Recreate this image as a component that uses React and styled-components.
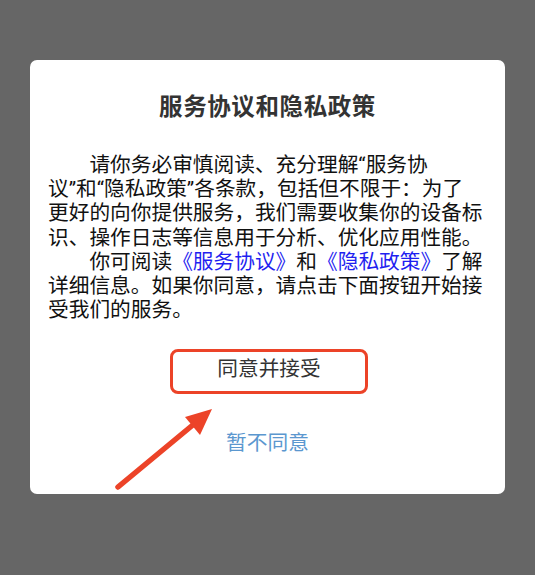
import React from "react";
import styled, { createGlobalStyle } from "styled-components";

const Global = createGlobalStyle`
  html, body { margin: 0; padding: 0; }
  body {
    background: #666666;
    font-family: "Roboto", "Noto Sans CJK SC", sans-serif;
  }
`;

const Screen = styled.div`
  width: 535px;
  height: 575px;
  background: #666666;
  padding-top: 60px;
  box-sizing: border-box;
  display: flex;
  justify-content: center;
`;

const Card = styled.div`
  position: relative;
  width: 475px;
  height: 434px;
  background: #ffffff;
  border-radius: 7px;
  box-sizing: border-box;
  padding: 32px 18px 0;
  display: flex;
  flex-direction: column;
  align-items: center;
`;

const Title = styled.h2`
  margin: 0;
  font-size: 23.5px;
  line-height: 30px;
  font-weight: 700;
  color: #333333;
  letter-spacing: 0.6px;
`;

const Body = styled.p`
  margin: 31px 0 0;
  align-self: stretch;
  font-size: 20.7px;
  line-height: 24.2px;
  color: #111111;
  white-space: nowrap;
`;

const Indent = styled.span`
  display: inline-block;
  width: 2em;
`;

const Link = styled.span`
  color: #1f1ff0;
`;

const AgreeButton = styled.button`
  margin-top: 27px;
  margin-left: 3px;
  width: 198px;
  height: 45px;
  box-sizing: border-box;
  border: 3.5px solid #ec4328;
  border-radius: 8px;
  background: #ffffff;
  font-family: inherit;
  font-size: 20.7px;
  line-height: 24px;
  color: #333333;
  padding: 0 0 6px;
`;

const Decline = styled.button`
  margin-top: 37px;
  border: none;
  background: none;
  padding: 0;
  font-family: inherit;
  font-size: 20.7px;
  line-height: 24px;
  color: #5b97cf;
`;

const Arrow = styled.svg`
  position: absolute;
  left: 0;
  top: 0;
  pointer-events: none;
`;

export default function App() {
  return (
    <>
      <Global />
      <Screen>
        <Card>
          <Title>服务协议和隐私政策</Title>
          <Body>
            <Indent />请你务必审慎阅读、充分理解“服务协
            <br />
            议”和“隐私政策”各条款，包括但不限于：为了
            <br />
            更好的向你提供服务，我们需要收集你的设备标
            <br />
            识、操作日志等信息用于分析、优化应用性能。
            <br />
            <Indent />你可阅读<Link>《服务协议》</Link>和<Link>《隐私政策》</Link>了解
            <br />
            详细信息。如果你同意，请点击下面按钮开始接
            <br />
            受我们的服务。
          </Body>
          <AgreeButton>同意并接受</AgreeButton>
          <Decline>暂不同意</Decline>
          <Arrow width="475" height="434" viewBox="0 0 475 434">
            <line
              x1="88"
              y1="427"
              x2="164"
              y2="364"
              stroke="#ec4328"
              strokeWidth="5.5"
              strokeLinecap="round"
            />
            <polygon points="182,349 155,357 170,375" fill="#ec4328" />
          </Arrow>
        </Card>
      </Screen>
    </>
  );
}
